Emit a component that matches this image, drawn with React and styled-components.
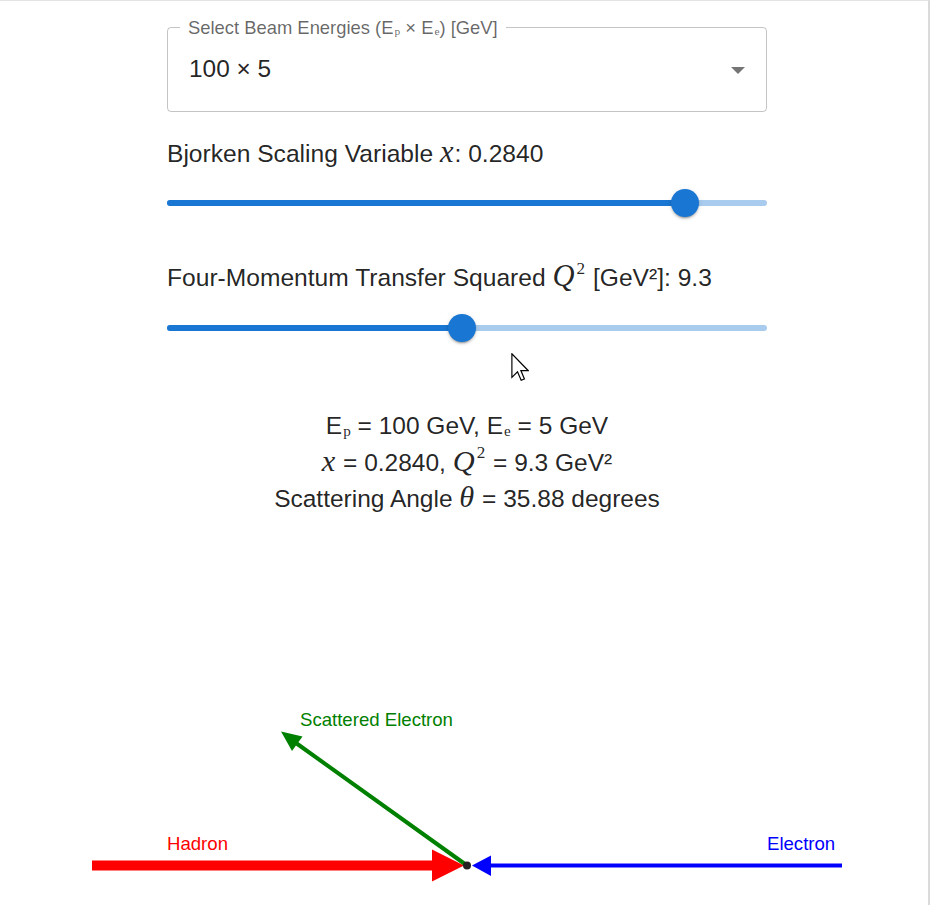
import React from "react";
import styled, { createGlobalStyle } from "styled-components";

const GlobalStyle = createGlobalStyle`
  html, body { margin: 0; padding: 0; background: #fff; }
  body {
    font-family: "Liberation Sans", Arial, sans-serif;
    color: rgba(0, 0, 0, 0.87);
    overflow: hidden;
  }
`;

const Frame = styled.div`
  position: relative;
  box-sizing: border-box;
  width: 930px;
  height: 905px;
  border-top: 1px solid #e3e3e3;
  border-right: 2px solid #dadada;
  overflow: hidden;
`;

const Column = styled.div`
  width: 600px;
  margin-left: 167px;
  padding-top: 16px;
  display: flex;
  flex-direction: column;
`;

const Outline = styled.fieldset`
  margin: 0;
  padding: 0;
  min-width: 0;
  border: 1px solid rgba(0, 0, 0, 0.23);
  border-radius: 4px;
`;

const Legend = styled.legend`
  margin-left: 12px;
  padding: 0 8px;
  font-size: 18.4px;
  line-height: 21px;
  color: rgba(0, 0, 0, 0.6);
`;

const ValueRow = styled.div`
  box-sizing: border-box;
  height: 73px;
  padding: 0 21px 11px 21px;
  display: flex;
  align-items: center;
  justify-content: space-between;
  font-size: 24.4px;
  color: rgba(0, 0, 0, 0.87);
`;

const Caret = styled.span`
  width: 0;
  height: 0;
  border-left: 7px solid transparent;
  border-right: 7px solid transparent;
  border-top: 7px solid rgba(0, 0, 0, 0.54);
  margin-top: 2px;
`;

const Sub = styled.span`
  font-family: "Liberation Serif", "DejaVu Serif", serif;
  font-size: 0.62em;
  vertical-align: -0.12em;
  line-height: 0;
  margin-left: 1px;
`;

const Math = styled.span`
  font-family: "Liberation Serif", "DejaVu Serif", serif;
  font-style: italic;
  font-size: 1.24em;
  line-height: 0;
  padding-right: 1px;
`;

const Sup = styled.sup`
  font-family: "Liberation Serif", "DejaVu Serif", serif;
  font-style: normal;
  font-size: 0.7em;
  line-height: 0;
  vertical-align: 0.72em;
  margin-left: 1px;
  margin-right: 1px;
`;

const SliderLabel = styled.div`
  margin-top: ${(p) => p.$gap}px;
  font-size: 24.6px;
  line-height: 36px;
`;

const SliderRoot = styled.div`
  position: relative;
  margin-top: ${(p) => p.$gap}px;
  height: 28px;
  display: flex;
  align-items: center;
`;

const Rail = styled.div`
  position: relative;
  width: 100%;
  height: 6px;
  border-radius: 3px;
  background: rgba(25, 118, 210, 0.38);
`;

const Fill = styled.div`
  height: 100%;
  border-radius: 3px;
  background: #1976d2;
`;

const Thumb = styled.span`
  position: absolute;
  top: 50%;
  width: 28px;
  height: 28px;
  margin: -14px 0 0 -14px;
  border-radius: 50%;
  background: #1976d2;
  box-shadow: 0px 3px 1px -2px rgba(0, 0, 0, 0.2),
    0px 2px 2px 0px rgba(0, 0, 0, 0.14), 0px 1px 5px 0px rgba(0, 0, 0, 0.12);
`;

const Info = styled.div`
  margin-top: 66px;
  text-align: center;
  font-size: 24.5px;
  line-height: 36.5px;
`;

const Diagram = styled.svg`
  display: block;
  margin-top: 42px;
  margin-left: -100px;
  width: 800px;
  height: 345px;
  flex: none;
`;

const Cursor = styled.svg`
  position: absolute;
  left: 511px;
  top: 352px;
  width: 18px;
  height: 28px;
`;

function Slider({ pct, gap, trackGap, children }) {
  return (
    <>
      <SliderLabel $gap={gap}>{children}</SliderLabel>
      <SliderRoot $gap={trackGap}>
        <Rail>
          <Fill style={{ width: `${pct}%` }} />
        </Rail>
        <Thumb style={{ left: `${pct}%` }} />
      </SliderRoot>
    </>
  );
}

export default function App() {
  const vx = 467;
  const vy = 865.5;
  const font = "Liberation Sans, Arial, sans-serif";
  return (
    <>
      <GlobalStyle />
      <Frame>
        <Column>
          <Outline>
            <Legend>
              Select Beam Energies (E<Sub>p</Sub> × E<Sub>e</Sub>) [GeV]
            </Legend>
            <ValueRow>
              <span>100 × 5</span>
              <Caret />
            </ValueRow>
          </Outline>

          <Slider pct={86.33} gap={24} trackGap={17}>
            Bjorken Scaling Variable <Math>x</Math>: 0.2840
          </Slider>

          <Slider pct={49.17} gap={43} trackGap={18}>
            Four-Momentum Transfer Squared <Math>Q</Math>
            <Sup>2</Sup> [GeV²]: 9.3
          </Slider>

          <Info>
            <div>
              E<Sub>p</Sub> = 100 GeV, E<Sub>e</Sub> = 5 GeV
            </div>
            <div>
              <Math>x</Math> = 0.2840, <Math>Q</Math>
              <Sup>2</Sup> = 9.3 GeV²
            </div>
            <div>
              Scattering Angle <Math>θ</Math> = 35.88 degrees
            </div>
          </Info>

          <Diagram viewBox="67 560 800 345">
            <line x1="92" y1={vy} x2="436" y2={vy} stroke="#ff0000" strokeWidth="10" />
            <polygon points={`432,849.5 ${vx - 3},${vy} 432,881.5`} fill="#ff0000" />
            <line x1="842" y1={vy} x2="488" y2={vy} stroke="#0000ff" strokeWidth="4" />
            <polygon points={`491,855.5 472,${vy} 491,876`} fill="#0000ff" />
            <line x1={vx} y1={vy} x2="296" y2="743" stroke="#008000" strokeWidth="4" />
            <polygon points="281,731.5 302.5,736.5 292,751" fill="#008000" />
            <circle cx={vx} cy={vy} r="4" fill="#222" />
            <text x="167" y="850" fill="#ff0000" fontSize="18.6" fontFamily={font}>
              Hadron
            </text>
            <text x="767" y="850" fill="#0000ff" fontSize="18.6" fontFamily={font}>
              Electron
            </text>
            <text x="300" y="726" fill="#008000" fontSize="18.6" fontFamily={font}>
              Scattered Electron
            </text>
          </Diagram>
        </Column>
        <Cursor viewBox="0 0 12 19">
          <path
            d="M0.5 0.5 L0.5 16.5 L4.3 12.8 L6.8 18.5 L9 17.6 L6.6 11.9 L11.5 11.9 Z"
            fill="#fff"
            stroke="#000"
            strokeWidth="0.8"
            strokeLinejoin="miter"
          />
        </Cursor>
      </Frame>
    </>
  );
}
